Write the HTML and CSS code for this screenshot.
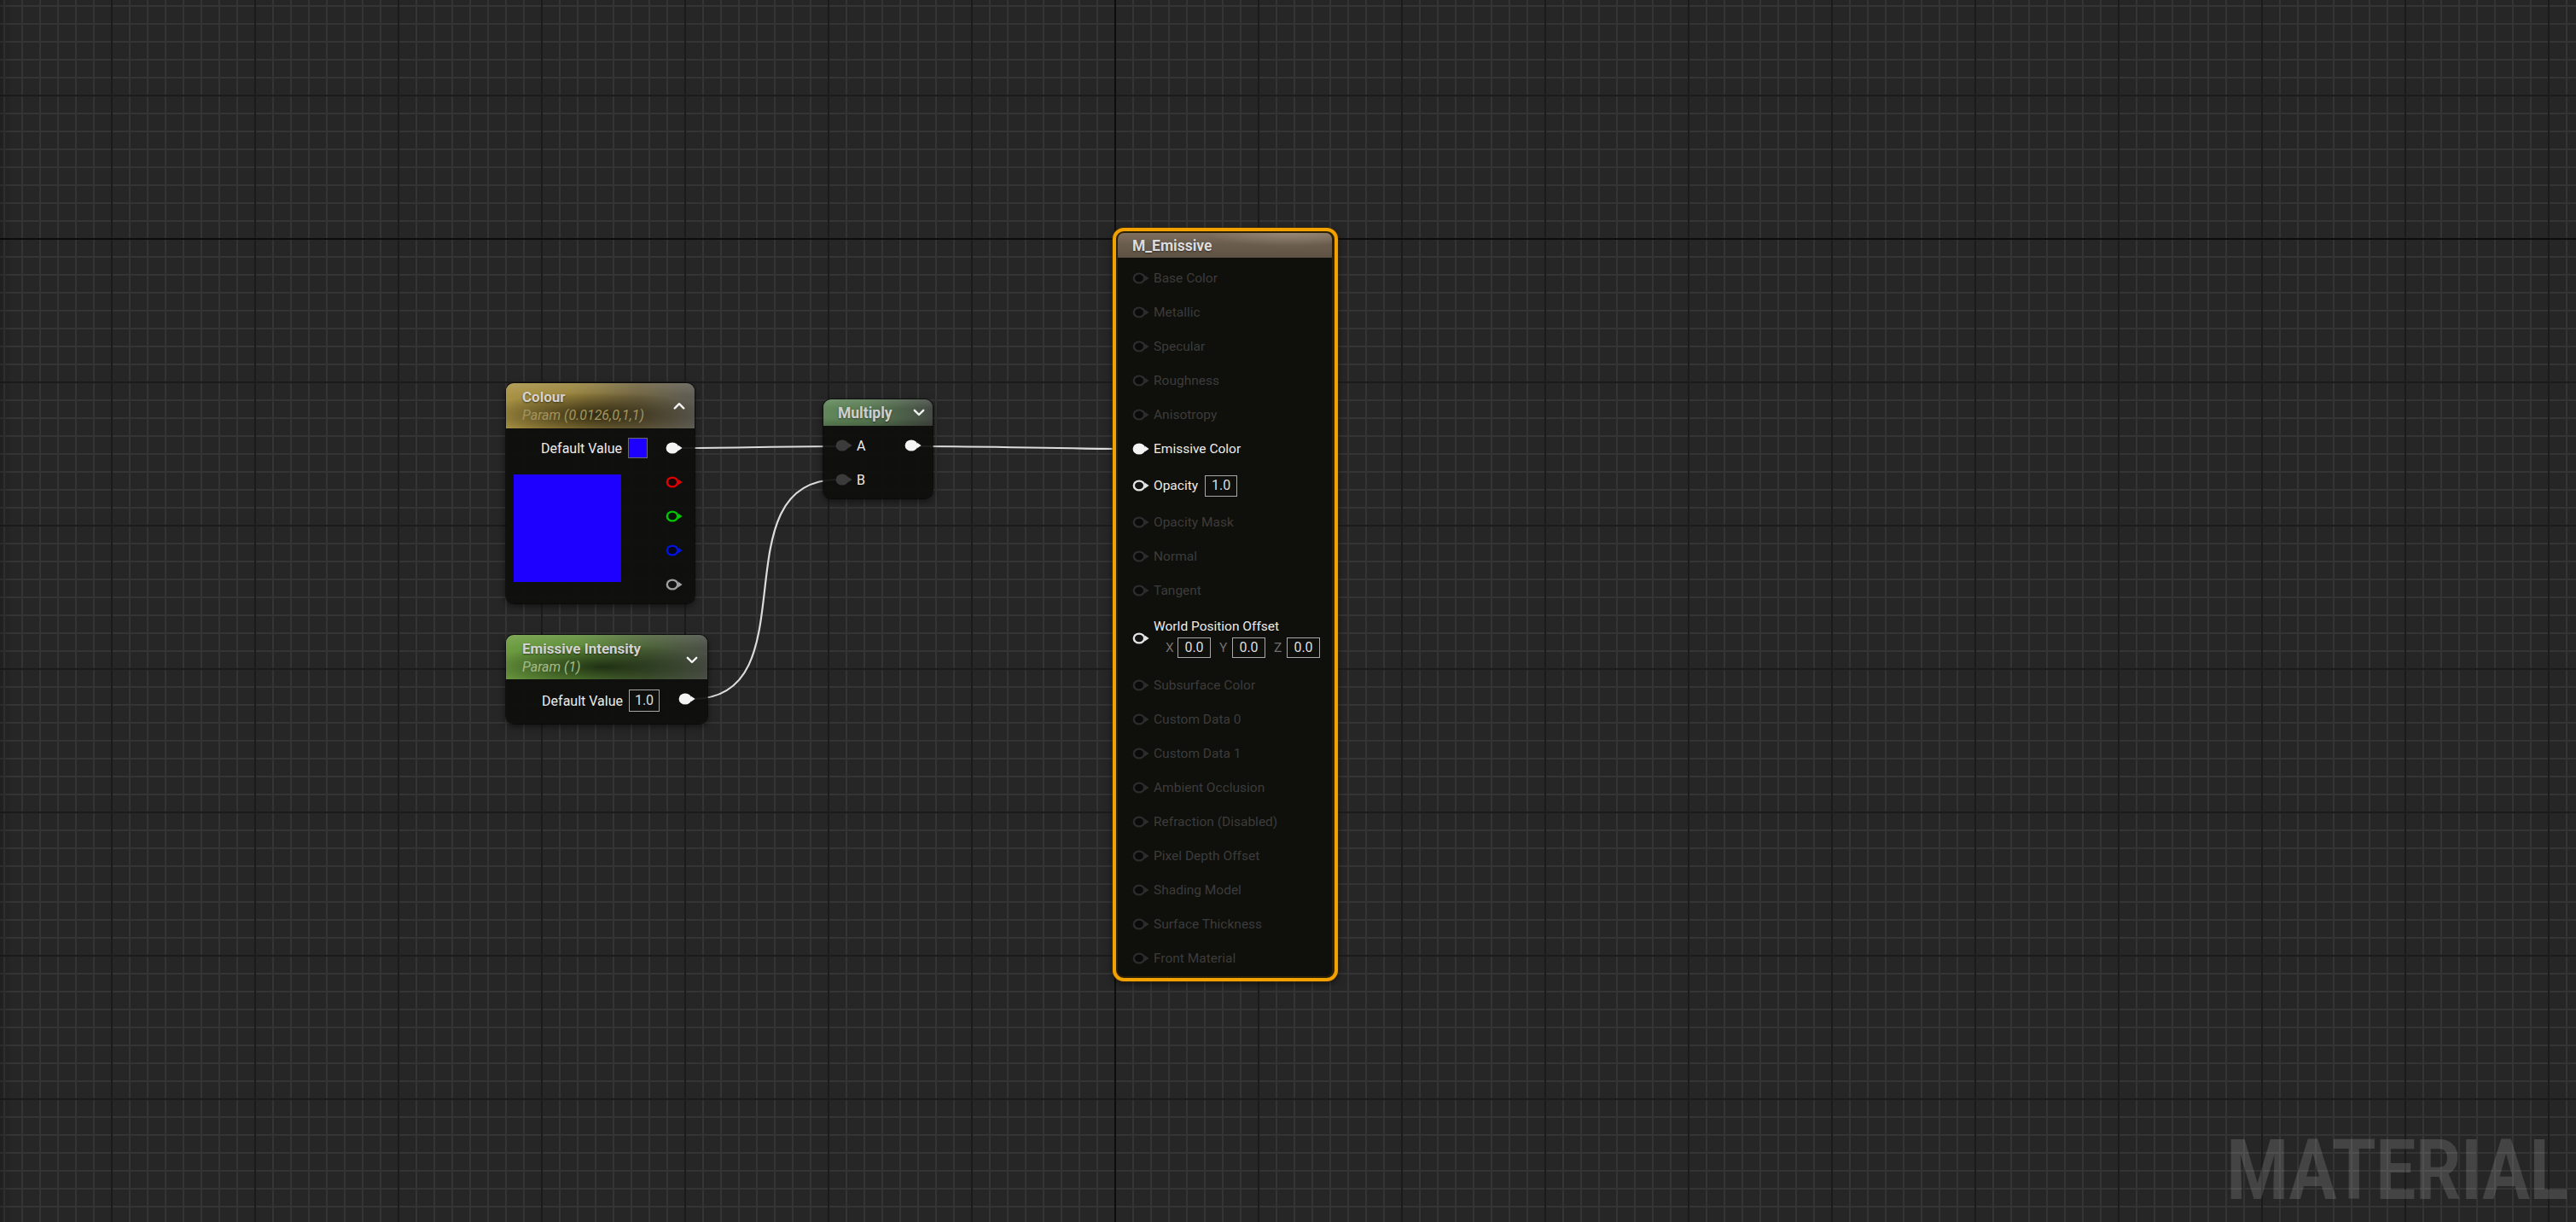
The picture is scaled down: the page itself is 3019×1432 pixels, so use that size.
FILE: index.html
```html
<!DOCTYPE html>
<html>
<head>
<meta charset="utf-8">
<title>Material Graph</title>
<link rel="stylesheet" href="styles.css">
</head>
<body>
<svg class="defs" width="0" height="0">
  <defs>
    <symbol id="pin" viewBox="0 0 20 14">
      <ellipse cx="8" cy="7" rx="6.2" ry="5.4" stroke="currentColor" stroke-width="2.4"/>
      <path d="M14.6 3.6 L19.6 7 L14.6 10.4 Z" fill="currentColor"/>
    </symbol>
    <symbol id="chev-up" viewBox="0 0 14 9">
      <polyline points="1.8,7.4 7,2.2 12.2,7.4" fill="none" stroke="currentColor" stroke-width="2.4" stroke-linecap="round" stroke-linejoin="round"/>
    </symbol>
    <symbol id="chev-down" viewBox="0 0 14 9">
      <polyline points="1.8,1.8 7,7 12.2,1.8" fill="none" stroke="currentColor" stroke-width="2.4" stroke-linecap="round" stroke-linejoin="round"/>
    </symbol>
  </defs>
</svg>

<div class="canvas">
  <svg class="wires" width="3019" height="1432" viewBox="0 0 3019 1432">
    <path d="M800 525 C 870 525, 910 523, 982 523"/>
    <path d="M1078 523 C 1170 523, 1240 526, 1330 526"/>
    <path d="M812 819 C 952 819, 840 562, 982 562"/>
  </svg>

  <!-- Colour parameter node -->
  <div class="node n-colour">
    <div class="hdr hdr-colour">
      <div class="hdr-text">
        <div class="title">Colour</div>
        <div class="sub sub-gold">Param (0.0126,0,1,1)</div>
      </div>
      <svg class="chev"><use href="#chev-up"/></svg>
    </div>
    <div class="body colour-body">
      <div class="col-left">
        <div class="vrow">
          <span class="lbl">Default Value</span>
          <span class="swatch-sm"></span>
        </div>
        <div class="swatch-big"></div>
      </div>
      <div class="col-pins">
        <div class="pinrow"><svg class="pin p-white"><use href="#pin"/></svg></div>
        <div class="pinrow"><svg class="pin p-red"><use href="#pin"/></svg></div>
        <div class="pinrow"><svg class="pin p-green"><use href="#pin"/></svg></div>
        <div class="pinrow"><svg class="pin p-blue"><use href="#pin"/></svg></div>
        <div class="pinrow"><svg class="pin p-alpha"><use href="#pin"/></svg></div>
      </div>
    </div>
  </div>

  <!-- Emissive Intensity node -->
  <div class="node n-intensity">
    <div class="hdr hdr-intensity">
      <div class="hdr-text">
        <div class="title">Emissive Intensity</div>
        <div class="sub sub-green">Param (1)</div>
      </div>
      <svg class="chev chev-low"><use href="#chev-down"/></svg>
    </div>
    <div class="body intensity-body">
      <div class="vrow">
        <span class="lbl">Default Value</span>
        <span class="valbox vb-int">1.0</span>
      </div>
      <svg class="pin p-white"><use href="#pin"/></svg>
    </div>
  </div>

  <!-- Multiply node -->
  <div class="node n-multiply">
    <div class="hdr hdr-multiply">
      <div class="title">Multiply</div>
      <svg class="chev"><use href="#chev-down"/></svg>
    </div>
    <div class="body multiply-body">
      <div class="mul-in">
        <div class="mrow"><svg class="pin p-gray"><use href="#pin"/></svg><span class="lbl">A</span></div>
        <div class="mrow"><svg class="pin p-gray"><use href="#pin"/></svg><span class="lbl">B</span></div>
      </div>
      <div class="mul-out">
        <div class="mrow"><svg class="pin p-white"><use href="#pin"/></svg></div>
      </div>
    </div>
  </div>

  <!-- Material result node -->
  <div class="sel n-result">
    <div class="node-inner">
      <div class="hdr hdr-result">
        <div class="title title-result">M_Emissive</div>
      </div>
      <div class="body result-body">
        <div class="rrow dim"><svg class="pin p-dim"><use href="#pin"/></svg><span>Base Color</span></div>
        <div class="rrow dim"><svg class="pin p-dim"><use href="#pin"/></svg><span>Metallic</span></div>
        <div class="rrow dim"><svg class="pin p-dim"><use href="#pin"/></svg><span>Specular</span></div>
        <div class="rrow dim"><svg class="pin p-dim"><use href="#pin"/></svg><span>Roughness</span></div>
        <div class="rrow dim"><svg class="pin p-dim"><use href="#pin"/></svg><span>Anisotropy</span></div>
        <div class="rrow on"><svg class="pin p-white"><use href="#pin"/></svg><span>Emissive Color</span></div>
        <div class="rrow on r-opacity"><svg class="pin p-ring"><use href="#pin"/></svg><span>Opacity</span><span class="valbox vb-op">1.0</span></div>
        <div class="rrow dim"><svg class="pin p-dim"><use href="#pin"/></svg><span>Opacity Mask</span></div>
        <div class="rrow dim"><svg class="pin p-dim"><use href="#pin"/></svg><span>Normal</span></div>
        <div class="rrow dim"><svg class="pin p-dim"><use href="#pin"/></svg><span>Tangent</span></div>
        <div class="rrow on r-wpo">
          <svg class="pin p-ring"><use href="#pin"/></svg>
          <div class="wpo">
            <span class="wpo-title">World Position Offset</span>
            <div class="xyz">
              <span class="axis">X</span><span class="valbox vb-xyz">0.0</span>
              <span class="axis">Y</span><span class="valbox vb-xyz">0.0</span>
              <span class="axis">Z</span><span class="valbox vb-xyz">0.0</span>
            </div>
          </div>
        </div>
        <div class="rrow dim"><svg class="pin p-dim"><use href="#pin"/></svg><span>Subsurface Color</span></div>
        <div class="rrow dim"><svg class="pin p-dim"><use href="#pin"/></svg><span>Custom Data 0</span></div>
        <div class="rrow dim"><svg class="pin p-dim"><use href="#pin"/></svg><span>Custom Data 1</span></div>
        <div class="rrow dim"><svg class="pin p-dim"><use href="#pin"/></svg><span>Ambient Occlusion</span></div>
        <div class="rrow dim"><svg class="pin p-dim"><use href="#pin"/></svg><span>Refraction (Disabled)</span></div>
        <div class="rrow dim"><svg class="pin p-dim"><use href="#pin"/></svg><span>Pixel Depth Offset</span></div>
        <div class="rrow dim"><svg class="pin p-dim"><use href="#pin"/></svg><span>Shading Model</span></div>
        <div class="rrow dim"><svg class="pin p-dim"><use href="#pin"/></svg><span>Surface Thickness</span></div>
        <div class="rrow dim"><svg class="pin p-dim"><use href="#pin"/></svg><span>Front Material</span></div>
      </div>
    </div>
  </div>

  <div class="watermark">MATERIAL</div>
</div>
</body>
</html>
```

FILE: styles.css
```css
html, body {
  margin: 0;
  padding: 0;
  background: #262626;
}

body {
  font-family: Roboto, "Noto Sans", "Liberation Sans", sans-serif;
  overflow: hidden;
}

.defs {
  position: absolute;
  width: 0;
  height: 0;
  overflow: hidden;
}

.canvas {
  position: relative;
  width: 3019px;
  height: 1432px;
  overflow: hidden;
  background-color: #262626;
  background-image:
    linear-gradient(to right, rgba(0,0,0,0.18), rgba(0,0,0,0) 14px),
    linear-gradient(#0d0d0d, #0d0d0d),
    linear-gradient(#0d0d0d, #0d0d0d),
    linear-gradient(to right, #1b1b1b 2px, transparent 2px),
    linear-gradient(to bottom, #1b1b1b 2px, transparent 2px),
    linear-gradient(to right, #343434 2px, transparent 2px),
    linear-gradient(to bottom, #343434 2px, transparent 2px);
  background-size: 100% 100%, 2px 100%, 100% 2px, 168px 100%, 100% 168px, 21px 100%, 100% 21px;
  background-position: 0 0, 1306px 0, 0 279px, 130px 0, 0 111px, 4px 0, 0 6px;
  background-repeat: no-repeat, no-repeat, no-repeat, repeat, repeat, repeat, repeat;
}

.wires {
  position: absolute;
  left: 0;
  top: 0;
}

.wires path {
  fill: none;
  stroke: #dcdcdc;
  stroke-width: 2.2;
}

/* ---------- generic node ---------- */
.node {
  position: absolute;
  display: flex;
  flex-direction: column;
  border-radius: 9px;
  overflow: hidden;
  box-shadow: 0 0 0 1px rgba(0,0,0,0.55), 0 3px 8px rgba(0,0,0,0.55);
  color: #e6e6e6;
  font-size: 16px;
}

.hdr {
  display: flex;
  align-items: center;
  justify-content: space-between;
  flex: none;
}

.title {
  font-weight: 700;
  font-size: 17px;
  line-height: 22px;
  color: #d2d2d2;
  text-shadow: 0 1px 2px rgba(0,0,0,0.5);
  white-space: nowrap;
}

.sub {
  font-style: italic;
  font-size: 16px;
  line-height: 22px;
  white-space: nowrap;
}

.sub-gold { color: #a3945f; }
.sub-green { color: #a6bb8a; }

.chev {
  width: 14px;
  height: 9px;
  color: #f2f2f2;
  flex: none;
}

.body {
  flex: 1;
  background: rgba(14, 15, 13, 0.93);
}

.lbl {
  color: #ececec;
  white-space: nowrap;
}

.pin {
  width: 20px;
  height: 14px;
  flex: none;
  display: block;
}

.p-white { color: #f4f4f4; fill: #f4f4f4; }
.p-red   { color: #e00000; fill: #180606; }
.p-green { color: #00c800; fill: #061206; }
.p-blue  { color: #0014e0; fill: #06061a; }
.p-alpha { color: #a0a0a0; fill: #121212; }
.p-gray  { color: #3b3b3b; fill: #3b3b3b; }
.p-ring  { color: #e4e4e4; fill: #141414; }
.p-dim   { color: #2c2c2c; fill: #0a0a0a; }

.valbox {
  display: flex;
  align-items: center;
  justify-content: center;
  box-sizing: border-box;
  border: 1.5px solid #a8a8a8;
  color: #dedede;
  font-size: 16px;
  line-height: 1;
  flex: none;
}

/* ---------- Colour node ---------- */
.n-colour {
  left: 593px;
  top: 449px;
  width: 221px;
  height: 258px;
}

.hdr-colour {
  height: 53px;
  box-sizing: border-box;
  padding: 0 11px 0 19px;
  background:
    linear-gradient(to bottom, rgba(255,255,255,0.12), rgba(255,255,255,0) 30%),
    radial-gradient(ellipse 62% 50% at 48% 70%, rgba(20,16,4,0.75), rgba(20,16,4,0) 100%),
    linear-gradient(to right, #a89243 0%, #98833c 35%, #6f6340 70%, #5d5b53 100%);
}

.hdr-text {
  display: flex;
  flex-direction: column;
  padding-top: 1px;
}

.colour-body {
  display: flex;
  padding: 3px 0 2px 9px;
}

.col-left {
  display: flex;
  flex-direction: column;
  width: 157px;
  flex: none;
}

.vrow {
  height: 40px;
  display: flex;
  align-items: center;
  justify-content: flex-end;
  gap: 7px;
}

.swatch-sm {
  width: 23px;
  height: 24px;
  box-sizing: border-box;
  border: 1.5px solid #6a6a6a;
  background: #1d00ff;
}

.swatch-big {
  margin-top: 11px;
  width: 126px;
  height: 126px;
  background: #1d00ff;
}

.col-pins {
  display: flex;
  flex-direction: column;
  padding-left: 21px;
}

.pinrow {
  height: 40px;
  display: flex;
  align-items: center;
}

/* ---------- Emissive Intensity node ---------- */
.n-intensity {
  left: 593px;
  top: 744px;
  width: 236px;
  height: 104px;
}

.hdr-intensity {
  height: 52px;
  box-sizing: border-box;
  padding: 0 11px 0 19px;
  background:
    linear-gradient(to bottom, rgba(255,255,255,0.12), rgba(255,255,255,0) 30%),
    radial-gradient(ellipse 62% 50% at 48% 72%, rgba(8,16,4,0.7), rgba(8,16,4,0) 100%),
    linear-gradient(to right, #6d9d40 0%, #5f8e38 35%, #4c6238 70%, #4b4f47 100%);
}

.chev-low {
  margin-top: 6px;
}

.intensity-body {
  display: flex;
  align-items: flex-start;
  padding: 5px 14px 0 0;
  justify-content: flex-end;
  gap: 22px;
}

.intensity-body .pin {
  margin-top: 11px;
}

.vb-int {
  width: 36px;
  height: 26px;
}

/* ---------- Multiply node ---------- */
.n-multiply {
  left: 965px;
  top: 468px;
  width: 128px;
  height: 116px;
}

.hdr-multiply {
  height: 31px;
  box-sizing: border-box;
  padding: 0 9px 0 17px;
  background:
    linear-gradient(to bottom, rgba(255,255,255,0.13), rgba(255,255,255,0) 35%, rgba(0,0,0,0) 70%, rgba(0,0,0,0.18)),
    linear-gradient(to right, #61875a 0%, #587a52 40%, #4a5a47 80%, #444944 100%);
}

.hdr-multiply .title {
  font-size: 17.5px;
  color: #cfcfcf;
}

.multiply-body {
  display: flex;
  justify-content: space-between;
  padding: 3px 13px 2px 14px;
}

.mrow {
  height: 40px;
  display: flex;
  align-items: center;
  gap: 5px;
}

/* ---------- Result node ---------- */
.sel {
  position: absolute;
  box-sizing: border-box;
  border: 4px solid #f2a200;
  border-radius: 13px;
  padding: 2px 3px 2px 2px;
  background: #2c2006;
  box-shadow: 0 0 0 1px rgba(80,50,0,0.5), 0 3px 8px rgba(0,0,0,0.5);
}

.n-result {
  left: 1304px;
  top: 267px;
  width: 264px;
  height: 883px;
}

.node-inner {
  display: flex;
  flex-direction: column;
  height: 100%;
  border-radius: 7px;
  overflow: hidden;
  font-size: 15.5px;
}

.hdr-result {
  height: 29px;
  box-sizing: border-box;
  padding: 0 0 0 17px;
  background:
    radial-gradient(ellipse 38% 55% at 80% 0%, rgba(255,240,220,0.2), rgba(255,255,255,0) 100%),
    linear-gradient(to bottom, #7e6f5e 0%, #6b5d4e 45%, #5e5244 100%);
}

.title-result {
  font-size: 17.5px;
  color: #dcdcdc;
}

.result-body {
  display: flex;
  flex-direction: column;
  padding: 4px 0 0 17px;
  background: rgba(13, 14, 12, 0.93);
}

.rrow {
  height: 40px;
  display: flex;
  align-items: center;
  gap: 5px;
  white-space: nowrap;
  flex: none;
}

.rrow.dim { color: #3c3c3c; }
.rrow.on { color: #ececec; }

.r-opacity {
  height: 46px;
}

.vb-op {
  width: 38px;
  height: 25px;
  margin-left: 3px;
}

.r-wpo {
  height: 71px;
}

.wpo {
  display: flex;
  flex-direction: column;
  gap: 3px;
}

.wpo-title {
  line-height: 20px;
}

.xyz {
  display: flex;
  align-items: center;
  padding-left: 14px;
}

.axis {
  color: #6e6e6e;
  width: 14px;
  font-size: 15.5px;
}

.vb-xyz {
  width: 39px;
  height: 24px;
  margin-right: 10px;
}

.vb-xyz + .axis {
  width: 15px;
}

/* ---------- watermark ---------- */
.watermark {
  position: absolute;
  right: 9px;
  top: 1323px;
  font-family: Roboto, "Liberation Sans", sans-serif;
  font-weight: 700;
  font-size: 98px;
  line-height: 98px;
  color: rgba(255,255,255,0.14);
  transform: scaleX(0.845);
  transform-origin: right top;
  white-space: nowrap;
}
```
